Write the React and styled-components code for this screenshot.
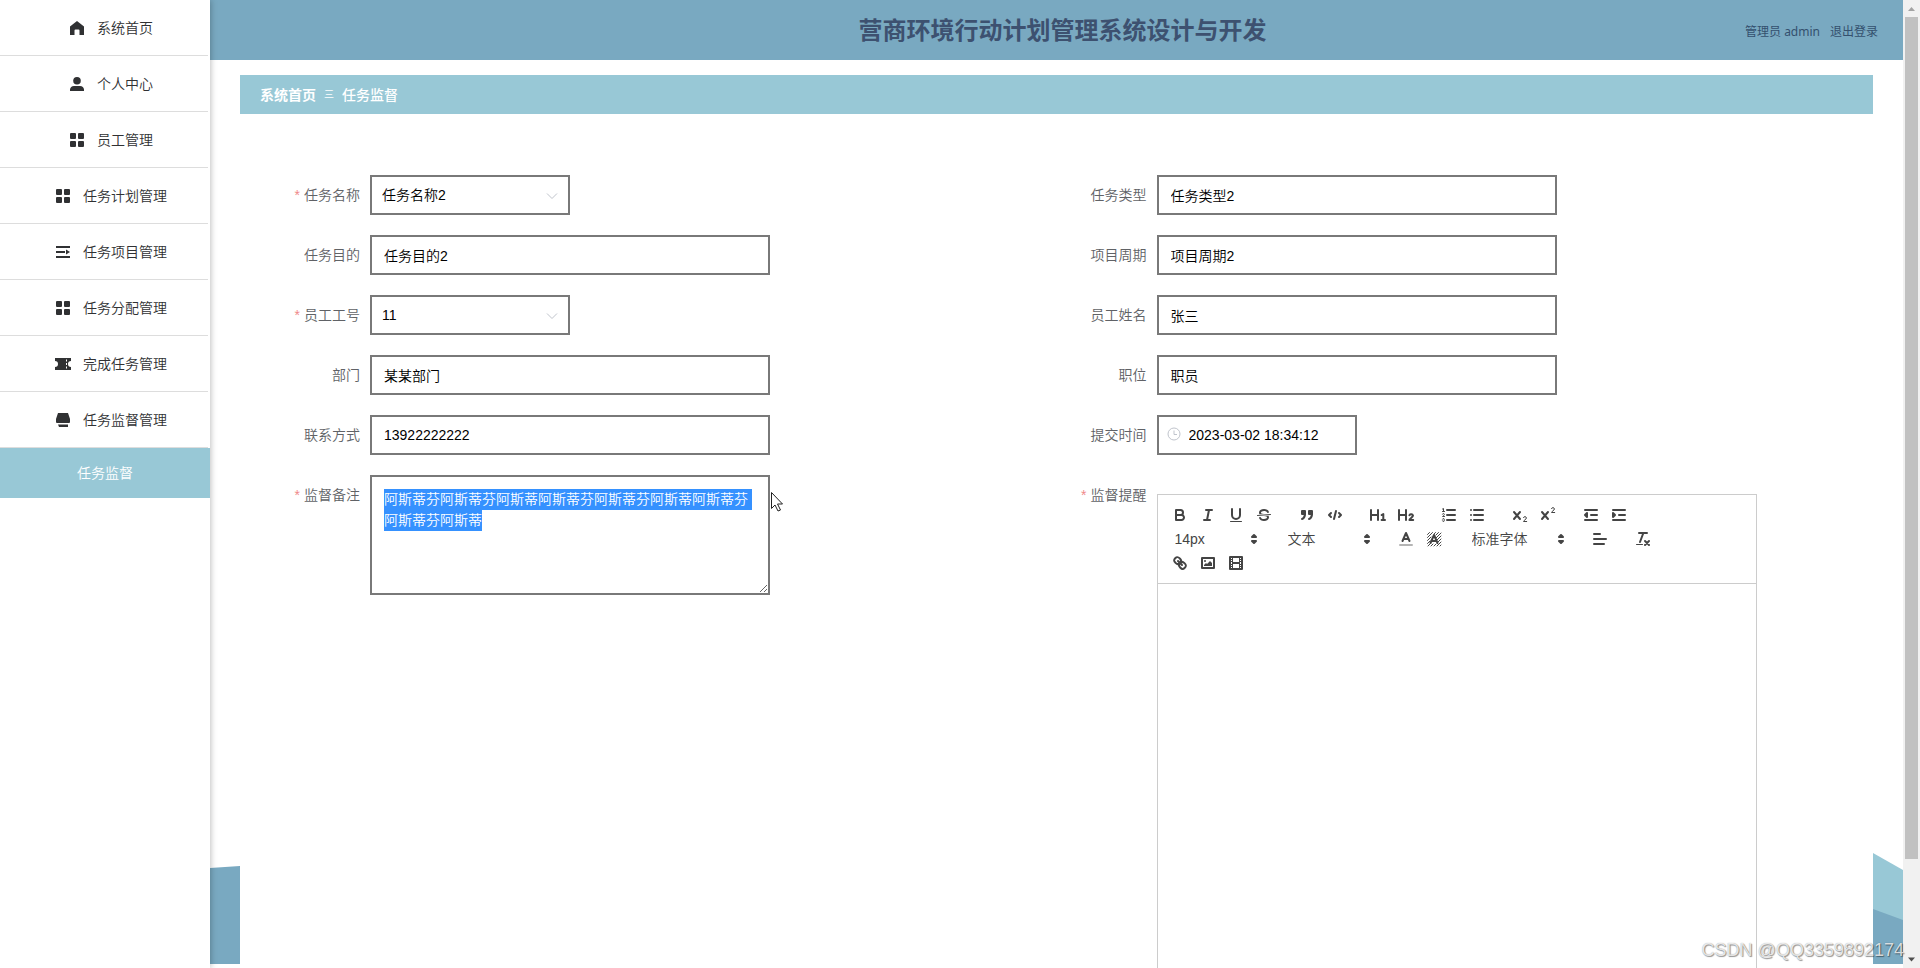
import React, { useEffect, useRef } from 'react';
import styled, { createGlobalStyle, css } from 'styled-components';

const GlobalStyle = createGlobalStyle`
  * {
    box-sizing: border-box;
  }
  body {
    margin: 0;
    font-family: "Liberation Sans", "Noto Sans CJK SC", sans-serif;
    font-size: 14px;
    font-weight: 350;
    color: #333;
    background: #fff;
  }
  button, input, select, textarea {
    font-family: inherit;
    font-size: 14px;
    font-weight: inherit;
  }
`;

const Shell = styled.div`
  position: relative;
  display: flex;
  height: 100vh;
  overflow: hidden;
`;

/* ---- sidebar ---- */

const Sidebar = styled.nav`
  z-index: 2;
  flex: 0 0 210px;
  background: #fff;
  box-shadow: 1px 0 6px rgba(0, 0, 0, 0.25);
`;

const MenuItem = styled.a`
  display: flex;
  align-items: center;
  justify-content: center;
  gap: 8px;
  height: 56px;
  margin-right: 2px;
  padding: 0 0 2px 10px;
  border-bottom: 1px solid #ddd;
  color: #303133;
  text-decoration: none;
`;

const MenuIcon = styled.svg`
  width: 24px;
  height: 16px;
  margin-top: 2px;
  fill: #303133;
`;

const SubItem = styled.a`
  display: flex;
  align-items: center;
  justify-content: center;
  height: 50px;
  padding-bottom: 2px;
  background: #98c8d6;
  color: #fff;
  text-decoration: none;
`;

/* ---- right side ---- */

const Content = styled.div`
  flex: 1;
  min-width: 0;
  display: flex;
  flex-direction: column;
`;

const Header = styled.header`
  flex: 0 0 60px;
  display: grid;
  grid-template-columns: 1fr auto 1fr;
  align-items: center;
  padding: 2px 25px 0 37px;
  background: #79a9c1;
`;

const Title = styled.h1`
  grid-column: 2;
  margin: 0;
  font-size: 24px;
  line-height: 32px;
  font-weight: bold;
  color: #3d5170;
`;

const UserBar = styled.div`
  display: flex;
  justify-content: flex-end;
  gap: 10px;
  font-family: "Noto Sans", "Noto Sans CJK SC", sans-serif;
  font-size: 12px;
  font-weight: 400;
  color: #34506e;
`;

const LogoutLink = styled.a`
  color: inherit;
  text-decoration: none;
`;

const Main = styled.main`
  position: relative;
  flex: 1;
  min-height: 0;
  display: flex;
  flex-direction: column;
  padding: 15px 30px 0;
`;

const Backdrop = styled.svg`
  position: absolute;
  left: 0;
  bottom: 4px;
  width: 100%;
  height: 111px;
`;

const Breadcrumb = styled.div`
  position: relative;
  display: flex;
  align-items: center;
  gap: 8px;
  flex: 0 0 39px;
  padding: 0 20px 2px;
  background: #98c8d6;
  color: #fff;
`;

const CrumbLink = styled.a`
  color: #fff;
  font-weight: bold;
  text-decoration: none;
`;

const CrumbMark = styled.span`
  font-size: 10px;
`;

const CrumbCurrent = styled.span`
  font-weight: 500;
`;

const Form = styled.form`
  position: relative;
  flex: 1 0 auto;
  display: grid;
  grid-template-columns: 1fr 1fr;
  align-content: start;
  row-gap: 20px;
  padding: 61px 30px 30px;
  background: #fff;
`;

const Field = styled.div`
  position: relative;
  display: flex;
  align-items: flex-start;
`;

const Label = styled.label`
  flex: 0 0 100px;
  padding-right: 10px;
  line-height: 40px;
  text-align: right;
  color: #606266;
`;

const Required = styled.span`
  margin-right: 4px;
  color: #f08a8a;
`;

const box = css`
  border: 2px solid #797979;
  border-radius: 0;
  background: #fff;
  color: #000;
  outline: none;
`;

const TextInput = styled.input`
  ${box}
  width: ${(p) => (p.$short ? '200px' : '400px')};
  height: 40px;
  padding: 0 12px 0 ${(p) => (p.$icon ? '30px' : '12px')};
`;

const Select = styled.select`
  ${box}
  appearance: none;
  width: 200px;
  height: 40px;
  padding: 0 30px 0 10px;
`;

const TextArea = styled.textarea`
  ${box}
  width: 400px;
  height: 120px;
  padding: 12px;
  line-height: 21px;

  &::selection {
    background: rgba(51, 144, 255, 0.99);
    color: #fff;
  }
`;

const Control = styled.div`
  position: relative;
  display: flex;
`;

const Chevron = styled.svg`
  position: absolute;
  right: 11px;
  top: 14px;
  width: 14px;
  height: 14px;
  fill: none;
  stroke: #c0c4cc;
  pointer-events: none;
`;

const Clock = styled.svg`
  position: absolute;
  left: 10px;
  top: 12px;
  width: 14px;
  height: 14px;
  fill: none;
  stroke: #c0c4cc;
`;

const Pointer = styled.svg`
  position: absolute;
  left: 500px;
  top: 16px;
  width: 14px;
  height: 22px;
`;

/* ---- rich text editor ---- */

const Editor = styled.div`
  flex: 0 1 600px;
  margin-top: 19px;
  border: 1px solid #ccc;
`;

const Toolbar = styled.div`
  display: flex;
  flex-wrap: wrap;
  padding: 8px 0 8px 8px;
  border-bottom: 1px solid #ccc;
`;

const Group = styled.div`
  display: flex;
  margin-right: 15px;
`;

const ToolButton = styled.button`
  width: 28px;
  height: 24px;
  padding: 3px 5px;
  border: 0;
  background: none;
`;

const ToolIcon = styled.svg`
  display: block;
  width: 18px;
  height: 18px;
  fill: none;
  stroke: #444;
  stroke-width: 2;
  stroke-linecap: round;
  stroke-linejoin: round;

  .fill {
    fill: #444;
    stroke: none;
  }
  .both {
    fill: #444;
  }
  .thin {
    stroke-width: 1;
  }
`;

const Picker = styled.div`
  position: relative;
  width: ${(p) => (p.$wide ? '108px' : '98px')};
  height: 24px;
`;

const PickerSelect = styled.select`
  appearance: none;
  width: 100%;
  height: 24px;
  padding: 0 18px 0 9px;
  border: 0;
  background: none;
  color: #444;
`;

const PickerArrows = styled(ToolIcon)`
  position: absolute;
  right: 1px;
  top: 3px;
  pointer-events: none;
`;

const EditorBody = styled.div`
  min-height: 420px;
  padding: 12px 15px;
  outline: none;
`;

/* ---- scrollbar and watermark ---- */

const ScrollTrack = styled.div`
  flex: 0 0 17px;
  display: flex;
  flex-direction: column;
  align-items: center;
  justify-content: space-between;
  background: #f1f1f1;
`;

const ScrollThumb = styled.div`
  flex: 0 0 87%;
  width: 13px;
  margin-bottom: auto;
  background: #c1c1c1;
`;

const ScrollArrow = styled.svg`
  flex: 0 0 17px;
  width: 17px;
  fill: ${(p) => (p.$dim ? '#a3a3a3' : '#505050')};
`;

const Watermark = styled.span`
  position: absolute;
  z-index: 3;
  right: 16px;
  bottom: 8px;
  font-size: 18px;
  line-height: 20px;
  color: rgba(255, 255, 255, 0.8);
  text-shadow: 1px 1px 1px rgba(0, 0, 0, 0.4), 0 0 1px rgba(0, 0, 0, 0.4);
`;

const menuIcons = {
  home: <path d="M12 1 5 6.5V15h4.5v-4.5a1 1 0 0 1 1-1h3a1 1 0 0 1 1 1V15H19V6.5Z" />,
  user: (
    <>
      <circle cx="12" cy="4.8" r="3.8" />
      <path d="M5 15v-1.500a4 4 0 0 1 4-3.500h6a4 4 0 0 1 4 3.500V15Z" />
    </>
  ),
  menu: (
    <>
      <rect x="5" y="1" width="6" height="6" rx="1" />
      <rect x="13" y="1" width="6" height="6" rx="1" />
      <rect x="5" y="9" width="6" height="6" rx="1" />
      <rect x="13" y="9" width="6" height="6" rx="1" />
    </>
  ),
  operation: (
    <>
      <rect x="5" y="2" width="14" height="2" />
      <rect x="5" y="7" width="9" height="2" />
      <path d="M15 5.500 19 8l-4 2.500Z" />
      <rect x="5" y="12" width="14" height="2" />
    </>
  ),
  ticket: (
    <path
      fillRule="evenodd"
      d="M4 2h16v3a3 3 0 0 0 0 6v3H4v-3a3 3 0 0 0 0-6ZM15 3.500v2h1v-2ZM15 7v2h1V7ZM15 10.500v2h1v-2Z"
    />
  ),
  shop: (
    <>
      <path d="M7 1h10l2 6v3a1 1 0 0 1-1 1H6a1 1 0 0 1-1-1V7Z" />
      <path d="M7 12.500h10V15H8Z" />
    </>
  ),
};

const menu = [
  { icon: 'home', text: '系统首页' },
  { icon: 'user', text: '个人中心' },
  { icon: 'menu', text: '员工管理' },
  { icon: 'menu', text: '任务计划管理' },
  { icon: 'operation', text: '任务项目管理' },
  { icon: 'menu', text: '任务分配管理' },
  { icon: 'ticket', text: '完成任务管理' },
  { icon: 'shop', text: '任务监督管理' },
];

const smallTwo = 'M12.500 11.600a1.500 1.500 0 0 1 2.900.4c0 1.500-2.900 2.300-2.900 3.500h3.200';

const toolIcons = {
  加粗: (
    <>
      <path d="M5,4H9.500A2.500,2.500,0,0,1,12,6.500v0A2.500,2.500,0,0,1,9.500,9H5Z" />
      <path d="M5,9h5.500A2.500,2.500,0,0,1,13,11.500v0A2.500,2.500,0,0,1,10.500,14H5Z" />
    </>
  ),
  斜体: <path d="M7,4H13M5,14H11M8,14L10,4" />,
  下划线: (
    <>
      <path d="M5,3V9a4,4,0,0,0,8,0V3" />
      <rect className="fill" x="3" y="15" width="12" height="1" rx="0.5" />
    </>
  ),
  删除线: (
    <>
      <path className="thin" d="M2.500,9.500L15.500,8.500" />
      <path
        className="fill"
        d="M9.007,8C6.542,7.791,6,7.519,6,6.500,6,5.792,7.283,5,9,5c1.571,0,2.765.679,2.969,1.309a1,1,0,0,0,1.900-.617C13.356,4.106,11.354,3,9,3,6.200,3,4,4.538,4,6.500a3.200,3.200,0,0,0,.5,1.843Z"
      />
      <path
        className="fill"
        d="M8.984,10C11.457,10.208,12,10.479,12,11.500c0,.708-1.283,1.500-3,1.500-1.571,0-2.765-.679-2.969-1.309a1,1,0,1,0-1.900.617C4.644,13.894,6.646,15,9,15c2.800,0,5-1.538,5-3.500a3.200,3.200,0,0,0-.5-1.843Z"
      />
    </>
  ),
  引用: (
    <>
      <rect className="both" x="4" y="5" width="3" height="3" />
      <rect className="both" x="11" y="5" width="3" height="3" />
      <path className="both" d="M7,8c0,4.031-3,5-3,5" />
      <path className="both" d="M14,8c0,4.031-3,5-3,5" />
    </>
  ),
  代码: <path d="M5,7L3,9L5,11M13,7L15,9L13,11M10,5L8,13" />,
  一级标题: (
    <>
      <path d="M2,4V14M9,4V14M2,9H9" />
      <path d="M12.600,9L14.300,8V14M12.600,14H16" />
    </>
  ),
  二级标题: (
    <>
      <path d="M2,4V14M9,4V14M2,9H9" />
      <path d="M12.400,9.200A2,1.800,0,0,1,16,9.600C16,11.400,12.400,12.400,12.400,14H16.200" />
    </>
  ),
  有序列表: (
    <>
      <path d="M7,4H15M7,9H15M7,14H15" />
      <path className="thin" d="M2.500,3L3.500,2.500V5.500M2.500,5.500H4.500" />
      <path className="thin" d="M4.500,10.500h-2c0-.234,1.850-1.076,1.850-2.234A.959,.959,0,0,0,2.500,8.156" />
      <path
        className="thin"
        d="M2.500,14.846a.959,.959,0,0,0,1.850-.109A.7,.7,0,0,0,3.750,14a.688,.688,0,0,0,.6-.736,.959,.959,0,0,0-1.850-.109"
      />
    </>
  ),
  无序列表: <path d="M6,4H15M6,9H15M6,14H15M3,4H3M3,9H3M3,14H3" />,
  下标: (
    <>
      <path d="M3,6L9,13M9,6L3,13" />
      <path className="thin" d={smallTwo} />
    </>
  ),
  上标: (
    <>
      <path d="M3,6L9,13M9,6L3,13" />
      <path className="thin" d={smallTwo} transform="translate(0 -9)" />
    </>
  ),
  减少缩进: (
    <>
      <path d="M3,4H15M9,9H15M3,14H15" />
      <path className="both" d="M5,7V11L3,9Z" />
    </>
  ),
  增加缩进: (
    <>
      <path d="M3,4H15M9,9H15M3,14H15" />
      <path className="both" d="M3,7V11L5,9Z" />
    </>
  ),
  文字颜色: (
    <>
      <path opacity="0.4" d="M3,15H15" />
      <path d="M5.500,11L9,3L12.500,11M6.400,9H11.600" />
    </>
  ),
  背景颜色: (
    <>
      <path
        className="thin"
        d="M2.500,4.500L4.500,2.500M2.500,7.500L7.500,2.500M2.500,10.500L6,7M2.500,13.500L5,11M3,16L5,14M6,16L8,14M9,16L11,14M12,16L16,12M15,16L16,15M13,12L16,9M12,10L16,6M11,8L16,3M11,5L13.500,2.500M9,4L10.500,2.500"
      />
      <path d="M5.500,13L9,5L12.500,13M6.400,11H11.600" />
    </>
  ),
  对齐: <path d="M3,4H9M3,9H15M3,14H13" />,
  清除格式: (
    <>
      <path d="M5,3H13M6,12L9.350,3M11,11L15,15M15,11L11,15" />
      <rect className="fill" x="2" y="14" width="7" height="1" rx="0.5" />
    </>
  ),
  链接: (
    <>
      <path d="M7,7L11,11" />
      <path d="M8.900,4.577a3.476,3.476,0,0,1,.36,4.679A3.476,3.476,0,0,1,4.577,8.900C3.185,7.500,2.035,6.400,4.217,4.217S7.500,3.185,8.900,4.577Z" />
      <path d="M13.423,9.100a3.476,3.476,0,0,0-4.679-.36,3.476,3.476,0,0,0,.36,4.679c1.392,1.392,2.500,2.542,4.679.36S14.815,10.500,13.423,9.100Z" />
    </>
  ),
  图片: (
    <>
      <rect x="3" y="4" width="12" height="10" />
      <circle className="fill" cx="6" cy="7" r="1" />
      <path className="fill" d="M5,12V11L7,9L8,10L11,7L13,9V12Z" />
    </>
  ),
  视频: (
    <>
      <rect x="3" y="3" width="12" height="12" />
      <path className="fill" d="M5,3h1v12h-1ZM12,3h1v12h-1ZM5,8h8v2h-8Z" />
      <path
        className="fill"
        d="M3,5h3v1h-3ZM3,7h3v1h-3ZM3,10h3v1h-3ZM3,12h3v1h-3ZM12,5h3v1h-3ZM12,7h3v1h-3ZM12,10h3v1h-3ZM12,12h3v1h-3Z"
      />
    </>
  ),
};

function Tools({ names }) {
  return (
    <Group>
      {names.map((name) => (
        <ToolButton key={name} type="button" aria-label={name}>
          <ToolIcon viewBox="0 0 18 18">{toolIcons[name]}</ToolIcon>
        </ToolButton>
      ))}
    </Group>
  );
}

function ToolPicker({ label, value, wide }) {
  return (
    <Group>
      <Picker $wide={wide}>
        <PickerSelect aria-label={label}>
          <option>{value}</option>
        </PickerSelect>
        <PickerArrows viewBox="0 0 18 18">
          <path className="both" d="M7,11L9,13L11,11ZM7,7L9,5L11,7Z" />
        </PickerArrows>
      </Picker>
    </Group>
  );
}

function FormLabel({ id, text, required }) {
  return (
    <Label htmlFor={id}>
      {required && <Required>*</Required>}
      {text}
    </Label>
  );
}

function InputField({ id, label, value }) {
  return (
    <Field>
      <FormLabel id={id} text={label} />
      <TextInput id={id} type="text" defaultValue={value} />
    </Field>
  );
}

function SelectField({ id, label, value }) {
  return (
    <Field>
      <FormLabel id={id} text={label} required />
      <Control>
        <Select id={id}>
          <option>{value}</option>
        </Select>
        <Chevron viewBox="0 0 14 14">
          <path d="M2 4.500 7 9.500 12 4.500" />
        </Chevron>
      </Control>
    </Field>
  );
}

function TimeField({ id, label, value }) {
  return (
    <Field>
      <FormLabel id={id} text={label} />
      <Control>
        <TextInput id={id} type="text" defaultValue={value} $short $icon />
        <Clock viewBox="0 0 14 14">
          <circle cx="7" cy="7" r="6" />
          <path d="M7 3.500V7.500H10" />
        </Clock>
      </Control>
    </Field>
  );
}

function RemarkField({ id, label, value }) {
  const ref = useRef(null);

  useEffect(() => {
    ref.current.focus();
    ref.current.select();
  }, []);

  return (
    <Field>
      <FormLabel id={id} text={label} required />
      <TextArea id={id} ref={ref} defaultValue={value} spellCheck={false} />
      <Pointer viewBox="0 0 14 22">
        <path
          d="M1.500 1.500V17.500L5 14L8 20L10.500 19L7.500 13H12.500Z"
          fill="#fff"
          stroke="#222"
        />
      </Pointer>
    </Field>
  );
}

function EditorField({ id, label }) {
  return (
    <Field>
      <FormLabel id={id} text={label} required />
      <Editor>
        <Toolbar>
          <Tools names={['加粗', '斜体', '下划线', '删除线']} />
          <Tools names={['引用', '代码']} />
          <Tools names={['一级标题', '二级标题']} />
          <Tools names={['有序列表', '无序列表']} />
          <Tools names={['下标', '上标']} />
          <Tools names={['减少缩进', '增加缩进']} />
          <ToolPicker label="字号" value="14px" />
          <ToolPicker label="标题" value="文本" />
          <Tools names={['文字颜色', '背景颜色']} />
          <ToolPicker label="字体" value="标准字体" wide />
          <Tools names={['对齐']} />
          <Tools names={['清除格式']} />
          <Tools names={['链接', '图片', '视频']} />
        </Toolbar>
        <EditorBody id={id} role="textbox" aria-label={label} contentEditable suppressContentEditableWarning />
      </Editor>
    </Field>
  );
}

function App() {
  return (
    <>
      <GlobalStyle />
      <Shell>
        <Sidebar>
          {menu.map((item) => (
            <MenuItem key={item.text} href="#">
              <MenuIcon viewBox="0 0 24 16">{menuIcons[item.icon]}</MenuIcon>
              {item.text}
            </MenuItem>
          ))}
          <SubItem href="#">任务监督</SubItem>
        </Sidebar>

        <Content>
          <Header>
            <Title>营商环境行动计划管理系统设计与开发</Title>
            <UserBar>
              <span>管理员 admin</span>
              <LogoutLink href="#">退出登录</LogoutLink>
            </UserBar>
          </Header>

          <Main>
            <Backdrop viewBox="0 0 1693 111" preserveAspectRatio="none">
              <polygon fill="#98c8d6" points="1400,30 1663,0 1693,17 1693,111 1400,111" />
              <polygon fill="#79a9c1" points="0,15 30,13 1663,56 1693,67 1693,111 0,111" />
            </Backdrop>
            <Breadcrumb>
              <CrumbLink href="#">系统首页</CrumbLink>
              <CrumbMark>三</CrumbMark>
              <CrumbCurrent>任务监督</CrumbCurrent>
            </Breadcrumb>
            <Form>
              <SelectField id="taskName" label="任务名称" value="任务名称2" />
              <InputField id="taskType" label="任务类型" value="任务类型2" />
              <InputField id="taskGoal" label="任务目的" value="任务目的2" />
              <InputField id="period" label="项目周期" value="项目周期2" />
              <SelectField id="staffNo" label="员工工号" value="11" />
              <InputField id="staffName" label="员工姓名" value="张三" />
              <InputField id="department" label="部门" value="某某部门" />
              <InputField id="position" label="职位" value="职员" />
              <InputField id="phone" label="联系方式" value="13922222222" />
              <TimeField id="submitTime" label="提交时间" value="2023-03-02 18:34:12" />
              <RemarkField
                id="remark"
                label="监督备注"
                value="阿斯蒂芬阿斯蒂芬阿斯蒂阿斯蒂芬阿斯蒂芬阿斯蒂阿斯蒂芬阿斯蒂芬阿斯蒂"
              />
              <EditorField id="reminder" label="监督提醒" />
            </Form>
          </Main>
        </Content>

        <ScrollTrack>
          <ScrollArrow viewBox="0 0 17 17" $dim>
            <path d="M5 11 8.500 7 12 11Z" />
          </ScrollArrow>
          <ScrollThumb />
          <ScrollArrow viewBox="0 0 17 17">
            <path d="M5 6.500 8.500 10.500 12 6.500Z" />
          </ScrollArrow>
        </ScrollTrack>

        <Watermark>CSDN @QQ3359892174</Watermark>
      </Shell>
    </>
  );
}

export default App;
